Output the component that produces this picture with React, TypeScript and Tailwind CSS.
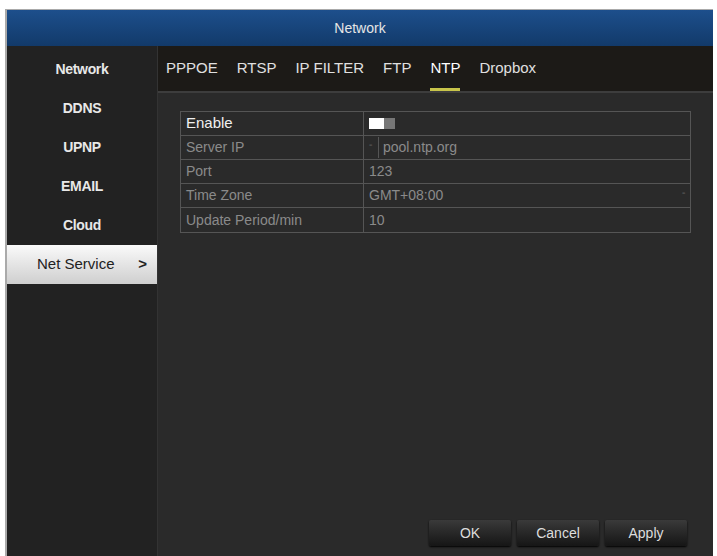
const tabs = ["PPPOE", "RTSP", "IP FILTER", "FTP", "NTP", "Dropbox"];
const menu = ["Network", "DDNS", "UPNP", "EMAIL", "Cloud"];

const Row = ({ label, children, bright }: { label: string; children: React.ReactNode; bright?: boolean }) => (
  <div className="flex h-6 border-b border-[#555] last:border-b-0">
    <div className={`flex w-[183px] items-center border-r border-[#555] px-[5px] ${bright ? "text-[#f0f0f0] text-[15px]" : "text-[#8a8a8a]"}`}>
      {label}
    </div>
    <div className="flex flex-1 items-center px-[5px] text-[#8a8a8a]">{children}</div>
  </div>
);

export default function App() {
  return (
    <div className="h-[556px] w-[717px] bg-white pl-[5px] pr-[4px] pt-[9px]" style={{ fontFamily: "'Liberation Sans', Arial, sans-serif" }}>
      <div className="flex h-full flex-col border-l-2 border-t border-[#aaa]">
        <div className="flex h-[36px] items-center justify-center bg-gradient-to-b from-[#1d4f8c] to-[#123a6a] text-[14px] text-[#e6e6e6]">
          Network
        </div>
        <div className="flex flex-1">
          <div className="flex w-[150px] flex-col bg-[#222] pt-[4px]">
            {menu.map((m) => (
              <div key={m} className="flex h-[39px] items-center justify-center text-[14px] font-bold tracking-tight text-[#e8e8e8]">
                {m}
              </div>
            ))}
            <div className="flex h-[39px] items-center justify-between bg-gradient-to-b from-[#fafafa] to-[#cfcfcf] pl-[30px] pr-[10px] text-[15px] text-[#222]">
              <span>Net Service</span>
              <span className="font-bold">&gt;</span>
            </div>
          </div>
          <div className="flex flex-1 flex-col border-l border-[#333] bg-[#2a2a2a]">
            <div className="flex h-[47px] items-end gap-[19px] border-b-2 border-[#3d3d3d] bg-[#1c1a17] pl-[8px] pr-[4px]">
              {tabs.map((t) => (
                <div key={t} className={`border-b-[3px] pb-[9px] text-[15px] ${t === "NTP" ? "border-[#c8c44a] text-white" : "border-transparent text-[#e0e0e0]"}`}>
                  {t}
                </div>
              ))}
            </div>
            <div className="mx-[22px] mt-[18px] border border-[#555] text-[14px]">
              <Row label="Enable" bright>
                <span className="flex h-[11px] w-[26px]">
                  <span className="w-[15px] bg-white" />
                  <span className="flex-1 bg-[#777]" />
                </span>
              </Row>
              <Row label="Server IP">
                <span className="mr-[6px] text-[10px]">⁻</span>
                <span className="border-l border-[#555] pl-[4px]">pool.ntp.org</span>
              </Row>
              <Row label="Port">123</Row>
              <Row label="Time Zone">
                <span className="flex-1">GMT+08:00</span>
                <span className="text-[10px]">⁻</span>
              </Row>
              <Row label="Update Period/min">10</Row>
            </div>
            <div className="mt-auto mb-[10px] flex justify-end gap-[6px] pr-[26px]">
              {["OK", "Cancel", "Apply"].map((b) => (
                <div key={b} className="flex h-[26px] w-[82px] items-center justify-center rounded-[2px] bg-gradient-to-b from-[#3a3a3a] to-[#161616] text-[14px] text-[#ddd] shadow-[0_1px_2px_#000]">
                  {b}
                </div>
              ))}
            </div>
          </div>
        </div>
      </div>
    </div>
  );
}
